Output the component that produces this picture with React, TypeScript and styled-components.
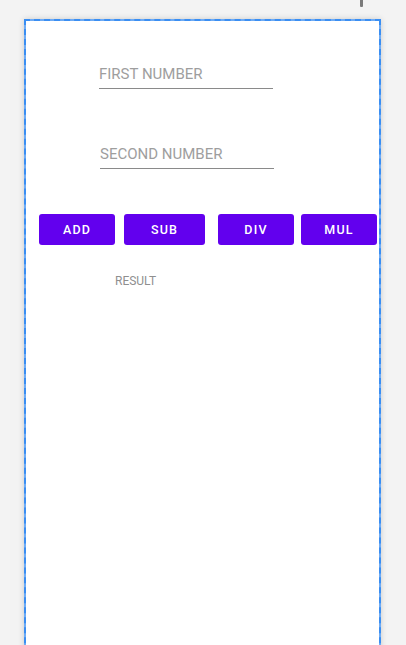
import React from "react";
import styled, { createGlobalStyle } from "styled-components";

const Global = createGlobalStyle`
  html, body { margin: 0; padding: 0; background: #f3f3f3; overflow: hidden; }
  body { font-family: Roboto, "Noto Sans", sans-serif; }
`;

const Page = styled.div`
  width: 406px;
  height: 645px;
  overflow: hidden;
  display: flex;
  flex-direction: column;
`;

const TopBar = styled.div`
  height: 19px;
  flex-shrink: 0;
  display: flex;
  justify-content: flex-end;
  padding-right: 43px;
`;

const Handle = styled.div`
  width: 3px;
  height: 7px;
  background: #7a7a7a;
  border-radius: 0 0 1px 1px;
`;

const Frame = styled.div`
  margin-left: 24px;
  width: 353px;
  height: 680px;
  flex-shrink: 0;
  border: 2px dashed #3a8ef2;
  background: linear-gradient(#fff, #fff) padding-box, #6eabf5 border-box;
  box-shadow: 0 0 6px rgba(0, 0, 0, 0.16);
  display: flex;
  flex-direction: column;
`;

const Field = styled.div<{ $left: number; $top: number }>`
  margin-left: ${(p) => p.$left}px;
  margin-top: ${(p) => p.$top}px;
  width: 174px;
  height: 24px;
  border-bottom: 1px solid #8a8a8a;
  display: flex;
  align-items: flex-start;
  box-sizing: border-box;
`;

const Placeholder = styled.span`
  font-size: 15px;
  color: #9e9e9e;
  line-height: 18px;
`;

const ButtonRow = styled.div`
  margin-top: 45px;
  margin-left: 13px;
  display: flex;
`;

const OpButton = styled.button<{ $width: number; $gap: number }>`
  width: ${(p) => p.$width}px;
  margin-right: ${(p) => p.$gap}px;
  height: 31px;
  border: none;
  border-radius: 3px;
  background: #6200ee;
  color: #fff;
  font-family: Roboto, sans-serif;
  font-weight: 500;
  font-size: 12.5px;
  letter-spacing: 1.2px;
  padding: 0;
  display: flex;
  align-items: center;
  justify-content: center;
  -webkit-font-smoothing: antialiased;
`;

const Result = styled.div`
  margin-top: 29px;
  margin-left: 89px;
  font-size: 12px;
  color: #8f8f8f;
  line-height: 14px;
`;

const buttons = [
  { label: "ADD", w: 76, gap: 9 },
  { label: "SUB", w: 81, gap: 13 },
  { label: "DIV", w: 76, gap: 7 },
  { label: "MUL", w: 76, gap: 0 },
];

export default function App() {
  return (
    <>
      <Global />
      <Page>
        <TopBar>
          <Handle />
        </TopBar>
        <Frame>
          <Field $left={73} $top={44}>
            <Placeholder>FIRST NUMBER</Placeholder>
          </Field>
          <Field $left={74} $top={56}>
            <Placeholder>SECOND NUMBER</Placeholder>
          </Field>
          <ButtonRow>
            {buttons.map((b) => (
              <OpButton key={b.label} $width={b.w} $gap={b.gap}>
                {b.label}
              </OpButton>
            ))}
          </ButtonRow>
          <Result>RESULT</Result>
        </Frame>
      </Page>
    </>
  );
}
